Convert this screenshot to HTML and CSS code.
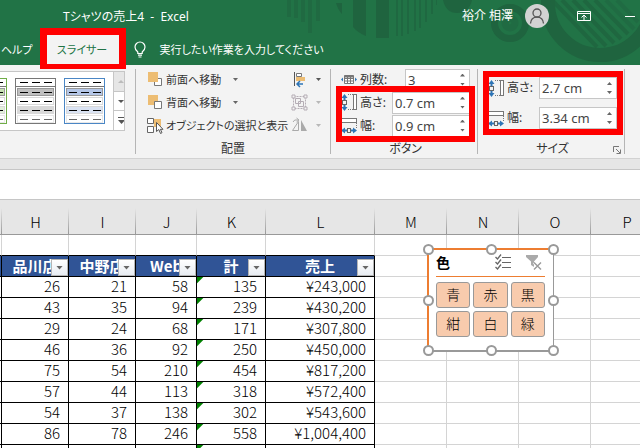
FILE: index.html
```html
<!DOCTYPE html>
<html lang="ja">
<head>
<meta charset="utf-8">
<title>Tシャツの売上4 - Excel</title>
<link rel="stylesheet" href="styles.css">
</head>
<body>
<svg width="0" height="0" class="defs" aria-hidden="true">
  <defs>
    <symbol id="i-height" viewBox="0 0 17 17">
      <path d="M3.500 0L6.500 4H4.500v2h-2V4H.5zM3.500 17L6.500 13H4.500v-2h-2v2H.5z" fill="#2e75b6"/>
      <rect x="1.500" y="6.500" width="4" height="4" fill="#f3f3f3" stroke="#666"/>
      <path d="M7 .5h5M7 15.500h5" stroke="#777" stroke-dasharray="1 1"/>
      <rect x="12.500" y=".5" width="3" height="15" fill="#fff" stroke="#777"/>
    </symbol>
    <symbol id="i-width" viewBox="0 0 17 17">
      <rect x=".5" y="1.500" width="15" height="4" fill="#fff" stroke="#777"/>
      <path d="M.5 6v5M15.500 6v5" stroke="#777" stroke-dasharray="1 1"/>
      <path d="M0 13.500L4 10.500v2h2v2H4v2zM16 13.500L12 10.500v2h-2v2h2v2z" fill="#2e75b6"/>
      <rect x="6.500" y="11.500" width="3" height="4" fill="#f3f3f3" stroke="#666"/>
    </symbol>
  </defs>
</svg>

<header class="top">
  <svg class="pattern" width="360" height="65" viewBox="280 0 360 65" aria-hidden="true">
    <g fill="#1f643f">
      <path opacity=".6" d="M287 0h4v17h-4zM294 0h4v18h-4zM301 0h4v22h-4zM308 0h4v33h-4zM316 0h4v21h-4z"/>
      <path d="M336 3h6v11q-4-4-6-11zM353 0h13v36q-8-3-13-9zM376 0h13v38h-13z"/>
      <path opacity=".7" d="M396 0h2v36h-2zM401 0h2v36h-2zM407 0h2v34h-2zM414 0h2v31h-2zM419 0h2v28h-2zM425 0h2v22h-2zM431 0h2v14h-2zM436 0h1v5h-1z"/>
      <path d="M443 0h29q-3 13-15 13-11 0-14-13z"/>
    </g>
    <g fill="none" stroke="#1f643f">
      <circle cx="510" cy="23" r="15.500" stroke-width="7"/>
      <circle cx="510" cy="23" r="5" stroke-width="7" opacity=".5"/>
      <circle cx="600" cy="3" r="52" stroke-width="14"/>
      <path opacity=".8" stroke-width="4" d="M552 0l45 47M562 0l44 46M573 0l41 43M584 0l37 39M595 0l33 34"/>
      <path opacity=".5" stroke-width="4" d="M606 0l28 29M617 0l21 22"/>
    </g>
  </svg>
  <div class="titlebar">
    <h1 class="doc">Tシャツの売上4&nbsp; -&nbsp; Excel</h1>
    <span class="user">裕介 相澤</span>
    <svg class="avatar" width="24" height="24" viewBox="0 0 24 24" aria-hidden="true">
      <circle cx="12" cy="12" r="12" fill="#d2d2d2"/>
      <g fill="none" stroke="#555" stroke-width="1.300"><circle cx="12" cy="9" r="4"/><path d="M5.500 19.500q.5-6.300 6.500-6.300t6.500 6.300"/></g>
    </svg>
    <button class="win opts" aria-label="リボンの表示オプション"><svg width="14" height="12" viewBox="0 0 14 12" fill="none" stroke="#fff"><path d="M.5 1.500h13v9H.5zM0 3.500h14M7 10V5M4.500 7.500L7 5l2.500 2.500"/></svg></button>
    <button class="win" aria-label="最小化"><svg width="10" height="12" viewBox="0 0 10 12" stroke="#fff"><path d="M0 6.500h10"/></svg></button>
  </div>
  <nav class="tabs">
    <a class="tab" href="#help">ヘルプ</a>
    <a class="tab active" href="#slicer">スライサー</a>
    <svg class="bulb" width="12" height="17" viewBox="0 0 12 17" fill="none" stroke="#fff" stroke-width="1.200" aria-hidden="true"><path d="M3.800 12.500V11Q1 9 1 6a5 5 0 0 1 10 0q0 3-2.800 5v1.500zM4 14.200h4M4.500 16h3"/></svg>
    <a class="tell" href="#tell">実行したい作業を入力してください</a>
  </nav>
</header>

<section class="ribbon">
  <div class="group styles">
    <div class="gallery">
      <button class="style green" aria-label="緑"><i></i><i></i><i></i><i></i><i></i></button>
      <button class="style grey" aria-label="灰色"><i></i><i></i><i></i><i></i><i></i></button>
      <button class="style blue" aria-label="青"><i></i><i></i><i></i><i></i><i></i></button>
      <div class="scroll">
        <button class="off" aria-label="上へ"><svg width="6" height="3"><path d="M0 3L3 0l3 3z" fill="#bbb"/></svg></button>
        <button aria-label="下へ"><svg width="6" height="3"><path d="M0 0h6L3 3z" fill="#555"/></svg></button>
        <button aria-label="その他"><svg width="7" height="7"><path d="M0 0h7v1H0zM0 3h7L3.500 7z" fill="#555"/></svg></button>
      </div>
    </div>
  </div>

  <div class="group arrange">
    <div class="cols">
      <div class="col">
        <button class="cmd"><svg width="17" height="17" viewBox="0 0 17 17"><path d="M10 7.500h4.500v7h-7V11" fill="#fff" stroke="#777"/><path d="M1 1h10v10H1z" fill="#edbd73"/></svg><span>前面へ移動</span><svg class="dd" width="5" height="3"><path d="M0 0h5L2.500 3z" fill="#666"/></svg></button>
        <button class="cmd"><svg width="17" height="17" viewBox="0 0 17 17"><path d="M1 1h10v10H1z" fill="#edbd73"/><path d="M7.500 7.500h7v7h-7z" fill="#fff" stroke="#777"/></svg><span>背面へ移動</span><svg class="dd" width="5" height="3"><path d="M0 0h5L2.500 3z" fill="#666"/></svg></button>
        <button class="cmd"><svg width="17" height="17" viewBox="0 0 17 17"><path d="M7 2h7v8H7z" fill="#edbd73"/><path d="M.5 1.500h6v5h-6zM.5 9.500h6v6h-6z" fill="#fff" stroke="#666"/><path d="M9.500 5.500v9l2.300-2 1.700 4 1.500-.8-1.600-3.400H16z" fill="#fff" stroke="#555"/></svg><span>オブジェクトの選択と表示</span></button>
      </div>
      <div class="col side">
        <button class="cmd" aria-label="配置"><svg width="17" height="17" viewBox="0 0 17 17"><path d="M3.500 1v14" stroke="#555"/><path d="M5.500 2.500h5v3h-5z" fill="#fff" stroke="#777"/><path d="M5 6h9v4H5z" fill="#edbd73"/><path d="M12 13H6m3-3l-3 3 3 3" fill="none" stroke="#2e75b6" stroke-width="1.500"/></svg><svg class="dd" width="5" height="3"><path d="M0 0h5L2.500 3z" fill="#555"/></svg></button>
        <button class="cmd" aria-label="グループ化"><svg width="17" height="17" viewBox="0 0 17 17" fill="none" stroke="#b5adb5"><path d="M2.500 2.500h12v12h-12z" stroke-dasharray="2 1"/><path d="M4.500 4.500h5v5h-5zM7.500 7.500h5v5h-5z"/><path d="M1 1h3v3H1zM13 1h3v3h-3zM1 13h3v3H1zM13 13h3v3h-3z" fill="#f3f3f3"/></svg><svg class="dd" width="5" height="3"><path d="M0 0h5L2.500 3z" fill="#b8b8b8"/></svg></button>
        <button class="cmd" aria-label="回転"><svg width="17" height="17" viewBox="0 0 17 17"><path d="M1.500 13.500h6v-9z" fill="none" stroke="#aaa"/><path d="M10 3v11h6z" fill="#aaa"/><path d="M2 5q1-3 5-2M5.500 1L8 3 5.500 5" fill="none" stroke="#aaa"/></svg><svg class="dd" width="5" height="3"><path d="M0 0h5L2.500 3z" fill="#b8b8b8"/></svg></button>
      </div>
    </div>
    <h2>配置</h2>
  </div>

  <div class="group fields">
    <div class="field">
      <svg width="17" height="17" viewBox="0 0 17 17"><path d="M3.500 4.500h9v8h-9zM3.500 7.500h9M3.500 10h9M6.500 5v7M9.500 5v7" fill="#fff" stroke="#777"/><path d="M3.500 4.500h9v2h-9z" fill="#777"/><path d="M0 8.500l2-2v4zM16 8.500l-2-2v4z" fill="#2e75b6"/></svg>
      <label for="cols">列数:</label>
      <div class="spin short"><input id="cols" value="3"><div class="steps"><button aria-label="増"></button><button aria-label="減"></button></div></div>
    </div>
    <div class="field">
      <svg width="17" height="17"><use href="#i-height"/></svg>
      <label for="bh">高さ:</label>
      <div class="spin"><input id="bh" value="0.7 cm"><div class="steps"><button aria-label="増"></button><button aria-label="減"></button></div></div>
    </div>
    <div class="field">
      <svg width="17" height="17"><use href="#i-width"/></svg>
      <label for="bw">幅:</label>
      <div class="spin"><input id="bw" value="0.9 cm"><div class="steps"><button aria-label="増"></button><button aria-label="減"></button></div></div>
    </div>
    <h2>ボタン</h2>
    <div class="mark mark-button"></div>
  </div>

  <div class="group fields size">
    <div class="field">
      <svg width="17" height="17"><use href="#i-height"/></svg>
      <label for="sh">高さ:</label>
      <div class="spin"><input id="sh" value="2.7 cm"><div class="steps"><button aria-label="増"></button><button aria-label="減"></button></div></div>
    </div>
    <div class="field">
      <svg width="17" height="17"><use href="#i-width"/></svg>
      <label for="sw">幅:</label>
      <div class="spin"><input id="sw" value="3.34 cm"><div class="steps"><button aria-label="増"></button><button aria-label="減"></button></div></div>
    </div>
    <h2>サイズ</h2>
    <button class="launcher" aria-label="サイズの詳細"><svg width="8" height="8" viewBox="0 0 8 8" fill="none" stroke="#777"><path d="M.5 6V.5H6M3 3l4 4M7.500 3.500v4h-4"/></svg></button>
    <div class="mark mark-size"></div>
  </div>
</section>

<div class="formula"></div>

<main class="sheet">
  <table class="grid">
    <colgroup><col class="w-g"><col class="w-h"><col class="w-h"><col class="w-j"><col class="w-k"><col class="w-l"><col class="w-m"><col class="w-m"><col class="w-m"><col class="w-m"><col></colgroup>
    <thead>
      <tr class="letters"><th></th><th>H</th><th>I</th><th>J</th><th>K</th><th>L</th><th>M</th><th>N</th><th>O</th><th>P</th><th></th></tr>
    </thead>
    <tbody>
      <tr class="above"><td></td><td></td><td></td><td></td><td></td><td></td><td></td><td></td><td></td><td></td><td></td></tr>
      <tr class="names"><th></th><th>品川店<button class="filter" aria-label="品川店の絞り込み"></button></th><th>中野店<button class="filter" aria-label="中野店の絞り込み"></button></th><th>Web<button class="filter" aria-label="Webの絞り込み"></button></th><th>計<button class="filter" aria-label="計の絞り込み"></button></th><th>売上<button class="filter" aria-label="売上の絞り込み"></button></th><td></td><td></td><td></td><td></td><td></td></tr>
      <tr class="data"><td></td><td>26</td><td>21</td><td>58</td><td>135</td><td>¥243,000</td><td></td><td></td><td></td><td></td><td></td></tr>
      <tr class="data"><td></td><td>43</td><td>35</td><td>94</td><td>239</td><td>¥430,200</td><td></td><td></td><td></td><td></td><td></td></tr>
      <tr class="data"><td></td><td>29</td><td>24</td><td>68</td><td>171</td><td>¥307,800</td><td></td><td></td><td></td><td></td><td></td></tr>
      <tr class="data"><td></td><td>46</td><td>36</td><td>92</td><td>250</td><td>¥450,000</td><td></td><td></td><td></td><td></td><td></td></tr>
      <tr class="data"><td></td><td>75</td><td>54</td><td>210</td><td>454</td><td>¥817,200</td><td></td><td></td><td></td><td></td><td></td></tr>
      <tr class="data"><td></td><td>57</td><td>44</td><td>113</td><td>318</td><td>¥572,400</td><td></td><td></td><td></td><td></td><td></td></tr>
      <tr class="data"><td></td><td>54</td><td>37</td><td>138</td><td>302</td><td>¥543,600</td><td></td><td></td><td></td><td></td><td></td></tr>
      <tr class="data"><td></td><td>86</td><td>78</td><td>246</td><td>558</td><td>¥1,004,400</td><td></td><td></td><td></td><td></td><td></td></tr>
      <tr class="data"><td></td><td></td><td></td><td></td><td></td><td></td><td></td><td></td><td></td><td></td><td></td></tr>
    </tbody>
  </table>

  <section class="slicer">
    <div class="slicer-head">
      <h2>色</h2>
      <button aria-label="複数選択"><svg width="17" height="17" viewBox="0 0 17 17" fill="none" stroke="#666"><path d="M7 3.500h9M7 8.500h9M7 13.500h9"/><path stroke-width="1.300" d="M.5 3l2 2L6 .5M.5 8l2 2L6 5.500M.5 13l2 2L6 10.500"/></svg></button>
      <button aria-label="フィルターのクリア"><svg width="17" height="17" viewBox="0 0 17 17"><path d="M0 1h12v2L8 7.500V13L5 11V7.500L0 3z" fill="#aaa"/><path d="M8 8.500l7 7M15 8.500l-7 7" stroke="#fff" stroke-width="3"/><path d="M8 8.500l7 7M15 8.500l-7 7" stroke="#999" stroke-width="1.400"/></svg></button>
    </div>
    <div class="items"><button>青</button><button>赤</button><button>黒</button><button>紺</button><button>白</button><button>緑</button></div>
    <span class="handle t l"></span><span class="handle t c"></span><span class="handle t r"></span>
    <span class="handle m l"></span><span class="handle m r"></span>
    <span class="handle b l"></span><span class="handle b c"></span><span class="handle b r"></span>
  </section>
</main>
</body>
</html>
```

FILE: styles.css
```css
* { box-sizing: border-box; }

body {
  margin: 0;
  height: 100vh;
  display: flex;
  flex-direction: column;
  overflow: hidden;
  background: #e6e6e6;
  color: #333;
  font-family: "Noto Sans", "Noto Sans CJK JP", sans-serif;
  font-size: 13px;
  line-height: 20px;
  font-feature-settings: "palt";
  white-space: nowrap;
}

.defs { position: absolute; }
svg { flex: none; display: block; }
h1, h2 { margin: 0; font-weight: 400; }
a { color: inherit; text-decoration: none; }
button, input {
  margin: 0;
  padding: 0;
  border: 0;
  background: none;
  color: inherit;
  font: inherit;
  font-feature-settings: inherit;
}

/* Title bar and tabs */
.top {
  position: relative;
  flex: none;
  background: #217346;
  color: #fff;
}
.pattern { position: absolute; top: 0; right: 0; }
.titlebar, .tabs { position: relative; display: flex; align-items: center; }
.titlebar { height: 34px; padding: 0 5px 2px 63px; font-size: 12px; }
.doc { font-size: 12px; line-height: 18px; padding-top: 2px; }
.user { margin-left: auto; }
.avatar { margin: 0 28px 0 12px; }
.opts { margin-right: 34px; }
.tabs { height: 31px; font-size: 11px; }
.tab { padding: 0 2px 0 1px; }
.tab.active {
  position: relative;
  display: flex;
  align-items: center;
  justify-content: center;
  width: 72px;
  height: 31px;
  margin-left: 12px;
  background: #f3f3f3;
  color: #217346;
}
.tab.active::after {
  content: "";
  position: absolute;
  z-index: 2;
  inset: -6px -7px -4px;
  border: 6px solid #f00;
  border-width: 7px 7px 5px;
}
.bulb { margin: 0 14px 0 15px; }

/* Ribbon */
.ribbon {
  flex: none;
  display: flex;
  height: 93px;
  background: #f3f3f3;
}
.group {
  position: relative;
  display: flex;
  flex-direction: column;
  padding-top: 3px;
}
.group::after {
  content: "";
  position: absolute;
  right: 0;
  top: 4px;
  bottom: 4px;
  border-right: 1px solid #b5b5b5;
}
.group h2 {
  margin-top: auto;
  text-align: center;
  font-size: 12px;
  line-height: 16px;
  padding-bottom: 1px;
}

.styles { width: 136px; padding: 6px 11px 0 0; }
.gallery {
  display: flex;
  align-items: center;
  gap: 8px;
  height: 60px;
  overflow: hidden;
  background: #fff;
  border: 1px solid #c6c6c6;
  border-left: 0;
}
.style {
  flex: none;
  display: flex;
  flex-direction: column;
  width: 41px;
  height: 46px;
  padding: 0 1px;
  border: 1px solid;
}
.style.green { margin-left: -34px; border-color: #70ad47; --head: #c6e0b4; --band: #e2efda; }
.style.grey { border-color: #777; --head: #bfbfbf; --band: #d9d9d9; }
.style.blue { border-color: #4a86c5; --head: #b4c6e7; --band: #dae3f3; }
.style i {
  height: 8px;
  margin-bottom: 1px;
  border: 1px solid #d9d9d9;
  background: repeating-linear-gradient(90deg, transparent 0 2px, #000 2px 10px, transparent 10px 12px) 0 3px / 100% 1px no-repeat;
}
.style i:first-child { margin: 0 -1px 1px; padding: 0; border: 0; border-bottom: 1px solid #777; background-position: 2px 3px; }
.style i:nth-child(2) { background-color: var(--head); border-color: #999; }
.style i:nth-child(4) { background-color: var(--band); }
.style i:nth-child(5) { margin-bottom: 0; opacity: .6; }
.scroll {
  flex: none;
  display: flex;
  flex-direction: column;
  align-self: stretch;
  width: 15px;
  margin-left: auto;
  border-left: 1px solid #c6c6c6;
}
.scroll button { flex: 1; display: grid; place-items: center; }
.scroll button + button { border-top: 1px solid #c6c6c6; }
.scroll .off { background: #e6e6e6; }

.arrange { width: 195px; padding-left: 11px; }
.cols { display: flex; justify-content: space-between; padding-right: 10px; }
.cmd {
  display: flex;
  align-items: center;
  gap: 2px;
  height: 23px;
}
.cmd span { font-size: 11px; }
.dd { margin-left: 10px; }
.side .dd { margin-left: 6px; }
.arrange h2 { padding-right: 12px; }

.fields { padding-left: 10px; padding-right: 8px; width: 147px; }
.field {
  display: flex;
  align-items: center;
  height: 23px;
  gap: 2px;
}
.size { padding-top: 8px; }
.size .field { height: 30px; }
.field label { font-size: 12px; }
.spin {
  display: flex;
  width: 78px;
  height: 22px;
  margin-left: auto;
  border: 1px solid #c6c6c6;
  background: #fff;
}
.spin.short { width: 65px; }
.spin input { flex: 1; min-width: 0; padding-left: 2px; color: #444; }
.steps {
  display: flex;
  flex-direction: column;
  justify-content: space-between;
  width: 13px;
  padding: 4px;
}
.steps button { width: 5px; height: 3px; background: #666; clip-path: polygon(50% 0, 100% 100%, 0 100%); }
.steps button + button { clip-path: polygon(0 0, 100% 0, 50% 100%); }
.launcher { position: absolute; right: 4px; bottom: 4px; }
.mark { position: absolute; z-index: 1; border: 6px solid #f00; pointer-events: none; }
.mark-button { inset: 21px 3px 16px 5px; }
.mark-size { inset: 6px 2px 23px 5px; }

/* Formula bar */
.formula {
  flex: none;
  height: 42px;
  border-top: 1px solid #d2d2d2;
  border-bottom: 1px solid #c6c6c6;
  background: linear-gradient(#e6e6e6 10px, #c6c6c6 10px 11px, #fff 11px);
}

/* Worksheet */
.sheet {
  position: relative;
  flex: 1;
  min-height: 0;
  overflow: hidden;
  background: #fff;
  color: #000;
  font-family: "Noto Sans CJK JP", sans-serif;
  font-size: 15px;
  font-weight: 300;
  font-feature-settings: normal;
}
.grid {
  width: 100%;
  min-width: 663px;
  table-layout: fixed;
  border-collapse: separate;
  border-spacing: 0;
}
.w-g { width: 2px; }
.w-h { width: 67px; }
.w-j { width: 61px; }
.w-k { width: 69px; }
.w-l { width: 109px; }
.w-m { width: 72px; }
.grid th, .grid td {
  position: relative;
  height: 21px;
  padding: 0;
  border: solid #d4d4d4;
  border-width: 0 1px 1px 0;
}
.grid .letters th {
  height: 35px;
  padding-top: 9px;
  border-right: 0;
  border-bottom-color: #999;
  background: linear-gradient(#e6e6e6, #999) right bottom / 1px 26px no-repeat #e6e6e6;
  font-weight: 300;
}
.grid .above td:nth-child(-n+6) { border-bottom-color: #000; }
.grid .names th {
  border-color: #000;
  background: #305496;
  color: #fff;
  font-weight: 700;
}
.grid .data td { text-align: right; vertical-align: top; line-height: 18px; }
.grid .data td:nth-child(-n+6) { padding-right: 8px; border-color: #000; }
.grid .data td:first-child { padding: 0; }
.grid .data td:nth-child(5) { background: linear-gradient(135deg, #008000 4px, transparent 5px) 0 0 / 7px 7px no-repeat; }
.filter {
  position: absolute;
  right: 0;
  bottom: 0;
  width: 17px;
  height: 17px;
  border: 1px solid #b5b5b5;
  background: linear-gradient(#fff, #e8ecf2);
}
.filter::after {
  content: "";
  display: block;
  width: 7px;
  height: 4px;
  margin: auto;
  background: #666;
  clip-path: polygon(0 0, 100% 0, 50% 100%);
}

/* Slicer floating over the cells */
.slicer {
  position: absolute;
  left: 427px;
  top: 48px;
  width: 127px;
  height: 104px;
  padding: 4px 8px 4px 7px;
  border: 2px solid #ed7d31;
  border-right: 1px solid #999;
  border-bottom: 2px solid #999;
  background: #fff;
}
.slicer-head {
  display: flex;
  align-items: center;
  height: 23px;
  margin-bottom: 5px;
  border-bottom: 1px solid #ed7d31;
}
.slicer-head h2 { margin-right: auto; font-size: 14px; font-weight: 700; line-height: 18px; padding-bottom: 6px; }
.slicer-head button { padding-bottom: 6px; }
.slicer-head button + button { margin: 0 2px 0 14px; }
.items { display: grid; grid-template-columns: repeat(3, 1fr); gap: 3px; }
.items button {
  height: 26px;
  border: 1px solid #999;
  border-radius: 3px;
  background: #f8cbad;
  font-size: 14px;
  font-weight: 300;
  line-height: 20px;
  padding-bottom: 2px;
}
.handle {
  position: absolute;
  width: 11px;
  height: 11px;
  border: 2px solid #999;
  border-radius: 50%;
  background: #fff;
}
.t { top: -6px; }
.m { top: 45px; }
.b { bottom: -6px; }
.l { left: -6px; }
.c { left: 57px; }
.r { right: -6px; }
```
